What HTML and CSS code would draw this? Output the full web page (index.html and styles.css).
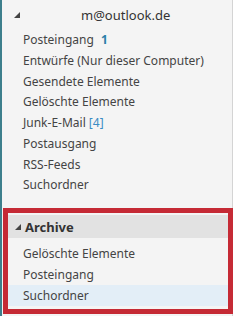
FILE: index.html
```html
<!DOCTYPE html>
<html lang="de">
<head>
  <meta charset="UTF-8">
  <title>Ordnerbereich</title>
  <link rel="stylesheet" href="styles.css">
</head>
<body>
  <div class="pane">
    <div class="account">
      <span class="caret"></span>
      <span class="mail">m@outlook.de</span>
    </div>
    <ul class="folders">
      <li>Posteingang <b class="count">1</b></li>
      <li>Entwürfe (Nur dieser Computer)</li>
      <li>Gesendete Elemente</li>
      <li>Gelöschte Elemente</li>
      <li>Junk-E-Mail <span class="unread">[4]</span></li>
      <li>Postausgang</li>
      <li>RSS-Feeds</li>
      <li>Suchordner</li>
    </ul>
    <div class="archive">
      <div class="archive-head">
        <span class="caret"></span>
        <span>Archive</span>
      </div>
      <ul class="folders sub">
        <li>Gelöschte Elemente</li>
        <li>Posteingang</li>
        <li class="selected">Suchordner</li>
      </ul>
    </div>
  </div>
</body>
</html>
```

FILE: styles.css
```css
body { margin: 0; background: #fff; font-family: "Noto Sans", "Open Sans", sans-serif; color: #444; }
.pane { width: 233px; height: 316px; box-sizing: border-box; background: #f4f4f4; border-left: 2px solid #3d7f8c; border-right: 1px solid #d4d4d4; }
.account { height: 30px; display: flex; align-items: center; padding-left: 12px; }
.caret { width: 0; height: 0; border-left: 6px solid transparent; border-bottom: 6px solid #444; }
.mail { margin-left: 61px; font-size: 13px; color: #333; }
.folders { list-style: none; margin: 0; padding: 0; font-size: 12px; }
.folders li { height: 20.75px; line-height: 20.75px; padding-left: 21px; }
.count { margin-left: 4px; color: #2a7fa8; }
.unread { color: #3a8cc4; }
.archive { margin: 12px -1px 0 1px; height: 106px; box-sizing: border-box; border: 5px solid #c52a35; }
.archive-head { height: 23px; display: flex; align-items: center; gap: 4px; padding-left: 7px; background: #e2e2e2; font-size: 13px; font-weight: bold; color: #333; margin-top: 2px; }
.sub { margin-top: 5px; }
.sub li { height: 21px; line-height: 21px; padding-left: 15px; }
.sub .selected { background: #e3eef7; }
```
